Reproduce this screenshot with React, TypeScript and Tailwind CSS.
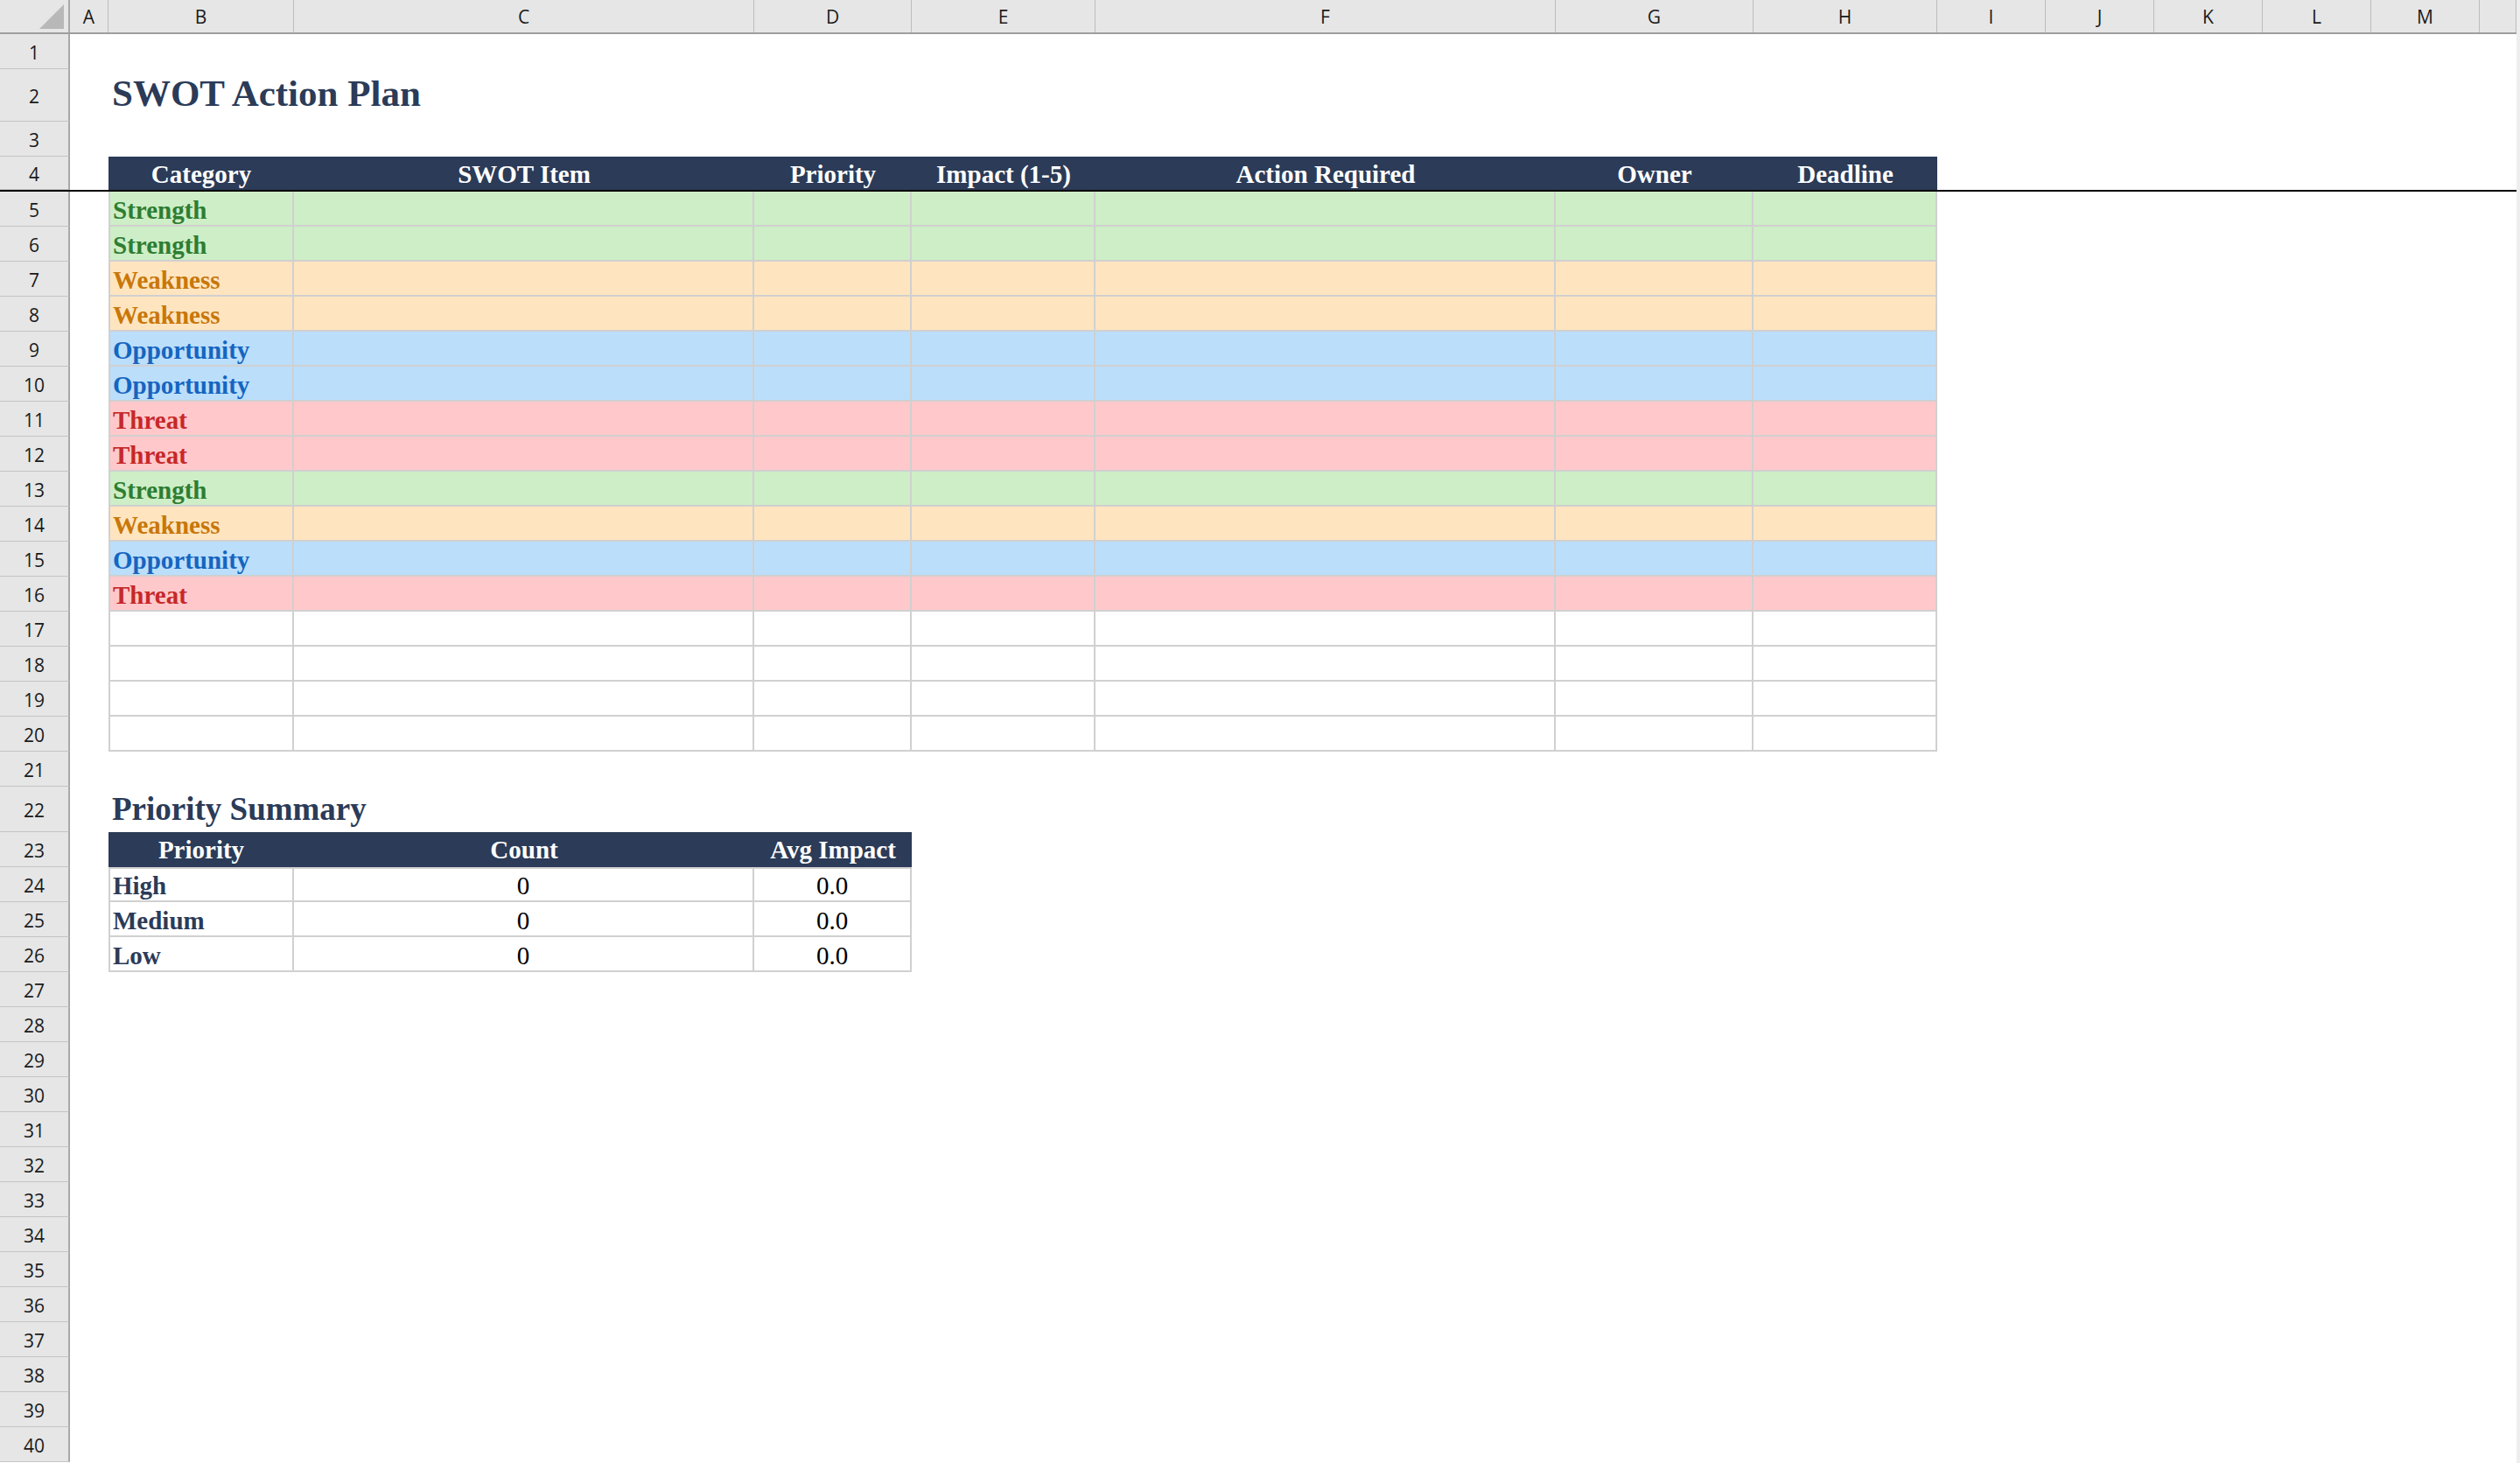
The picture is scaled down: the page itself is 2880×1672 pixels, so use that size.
import React from 'react';

type Col = { key: string; w: string };

const HEAD_COLS: Col[] = [
  { key: 'A', w: 'w-[44px]' },
  { key: 'B', w: 'w-[212px]' },
  { key: 'C', w: 'w-[526px]' },
  { key: 'D', w: 'w-[180px]' },
  { key: 'E', w: 'w-[210px]' },
  { key: 'F', w: 'w-[526px]' },
  { key: 'G', w: 'w-[226px]' },
  { key: 'H', w: 'w-[210px]' },
  { key: 'I', w: 'w-[124px]' },
  { key: 'J', w: 'w-[124px]' },
  { key: 'K', w: 'w-[124px]' },
  { key: 'L', w: 'w-[124px]' },
  { key: 'M', w: 'w-[124px]' },
  { key: '', w: 'w-[42px]' },
];

const TW = ['w-[212px]', 'w-[526px]', 'w-[180px]', 'w-[210px]', 'w-[526px]', 'w-[226px]', 'w-[210px]'];
const HEADERS = ['Category', 'SWOT Item', 'Priority', 'Impact (1-5)', 'Action Required', 'Owner', 'Deadline'];

const CAT_STYLE: Record<string, { bg: string; fg: string }> = {
  Strength: { bg: 'bg-[#CDEEC6]', fg: 'text-[#2E7D32]' },
  Weakness: { bg: 'bg-[#FFE5BF]', fg: 'text-[#C8770A]' },
  Opportunity: { bg: 'bg-[#BBDEFB]', fg: 'text-[#1565C0]' },
  Threat: { bg: 'bg-[#FFC8CB]', fg: 'text-[#C62828]' },
};

const DATA: string[] = [
  'Strength',
  'Strength',
  'Weakness',
  'Weakness',
  'Opportunity',
  'Opportunity',
  'Threat',
  'Threat',
  'Strength',
  'Weakness',
  'Opportunity',
  'Threat',
  '',
  '',
  '',
  '',
];

const SUMMARY = [
  { p: 'High', c: '0', a: '0.0' },
  { p: 'Medium', c: '0', a: '0.0' },
  { p: 'Low', c: '0', a: '0.0' },
];

function ColHeader() {
  return (
    <div className="flex h-[39px] shrink-0 border-b-2 border-b-[#9E9E9E] bg-[#E6E6E6] font-['Open_Sans',sans-serif] text-[21px] text-[#1A1A1A]">
      <div className="relative w-[80px] shrink-0 border-r-2 border-r-[#A8A8A8]">
        <svg className="absolute left-0 top-0" width="78" height="37" viewBox="0 0 78 37">
          <polygon points="45,33 73,33 73,5" fill="#B8B8B8" />
        </svg>
      </div>
      {HEAD_COLS.map((c, i) => (
        <div
          key={i}
          className={`${c.w} shrink-0 flex items-center justify-center pt-[3px] border-r border-r-[#BDBDBD]`}
        >
          {c.key}
        </div>
      ))}
    </div>
  );
}

function RowHead({ n }: { n: number }) {
  return (
    <div className="w-[80px] shrink-0 h-full flex items-center justify-center pt-[4px] bg-[#E6E6E6] border-r-2 border-r-[#A8A8A8] border-b border-b-[#C4C4C4] font-['Open_Sans',sans-serif] text-[21px] text-[#1A1A1A]">
      {n}
    </div>
  );
}

function Row({
  n,
  h = 'h-[40px]',
  className = '',
  children,
}: {
  n: number;
  h?: string;
  className?: string;
  children?: React.ReactNode;
}) {
  return (
    <div className={`flex shrink-0 ${h} ${className}`}>
      <RowHead n={n} />
      <div className="w-[44px] shrink-0" />
      {children}
    </div>
  );
}

export default function App() {
  const rowsAfter: number[] = [];
  for (let i = 27; i <= 40; i++) rowsAfter.push(i);

  return (
    <div className="flex w-[2880px] h-[1672px] overflow-hidden bg-white font-['Liberation_Serif','Times_New_Roman',serif]">
      <div className="w-[2876px] shrink-0 flex flex-col">
        <ColHeader />

        <Row n={1} />
        <Row n={2} h="h-[60px]">
          <div className="flex-1 pl-[4px] whitespace-nowrap text-[43px] leading-[56px] font-bold text-[#2B3B58]">
            SWOT Action Plan
          </div>
        </Row>
        <Row n={3} />

        <Row n={4} className="border-b-2 border-b-black">
          {HEADERS.map((t, i) => (
            <div
              key={i}
              className={`${TW[i]} shrink-0 h-full bg-[#2B3B58] text-white font-bold text-center whitespace-nowrap text-[29px] leading-[36px] pt-[2px]`}
            >
              {t}
            </div>
          ))}
        </Row>

        {DATA.map((cat, r) => {
          const st = cat ? CAT_STYLE[cat] : { bg: 'bg-white', fg: 'text-black' };
          return (
            <Row key={r} n={r + 5}>
              {TW.map((w, i) => (
                <div
                  key={i}
                  className={`${w} shrink-0 h-full border-b-2 border-r-2 border-[#D0D0D0] ${
                    i === 0 ? 'border-l-2' : ''
                  } ${st.bg} ${st.fg} font-bold whitespace-nowrap text-[29px] leading-[36px] pt-[3px] pl-[3px]`}
                >
                  {i === 0 ? cat : ''}
                </div>
              ))}
            </Row>
          );
        })}

        <Row n={21} />
        <Row n={22} h="h-[52px]">
          <div className="flex-1 pl-[4px] whitespace-nowrap text-[37px] leading-[52px] font-bold text-[#2B3B58]">
            Priority Summary
          </div>
        </Row>
        <Row n={23}>
          {['Priority', 'Count', 'Avg Impact'].map((t, i) => (
            <div
              key={i}
              className={`${TW[i]} shrink-0 h-full bg-[#2B3B58] text-white font-bold text-center whitespace-nowrap text-[29px] leading-[36px] pt-[2px]`}
            >
              {t}
            </div>
          ))}
        </Row>
        {SUMMARY.map((s, r) => (
          <Row key={s.p} n={24 + r}>
            <div
              className={`w-[212px] shrink-0 h-full border-b-2 border-r-2 border-l-2 border-[#D0D0D0] ${
                r === 0 ? 'border-t-2 pt-[1px]' : 'pt-[3px]'
              } pl-[3px] text-[29px] leading-[36px] font-bold text-[#2B3B58] whitespace-nowrap`}
            >
              {s.p}
            </div>
            <div
              className={`w-[526px] shrink-0 h-full border-b-2 border-r-2 border-[#D0D0D0] ${
                r === 0 ? 'border-t-2 pt-[1px]' : 'pt-[3px]'
              } text-center text-[29px] leading-[36px] text-black`}
            >
              {s.c}
            </div>
            <div
              className={`w-[180px] shrink-0 h-full border-b-2 border-r-2 border-[#D0D0D0] ${
                r === 0 ? 'border-t-2 pt-[1px]' : 'pt-[3px]'
              } text-center text-[29px] leading-[36px] text-black`}
            >
              {s.a}
            </div>
          </Row>
        ))}

        {rowsAfter.map((n) => (
          <Row key={n} n={n} />
        ))}
      </div>
      <div className="w-[4px] shrink-0 bg-[#EEEEEE]" />
    </div>
  );
}
